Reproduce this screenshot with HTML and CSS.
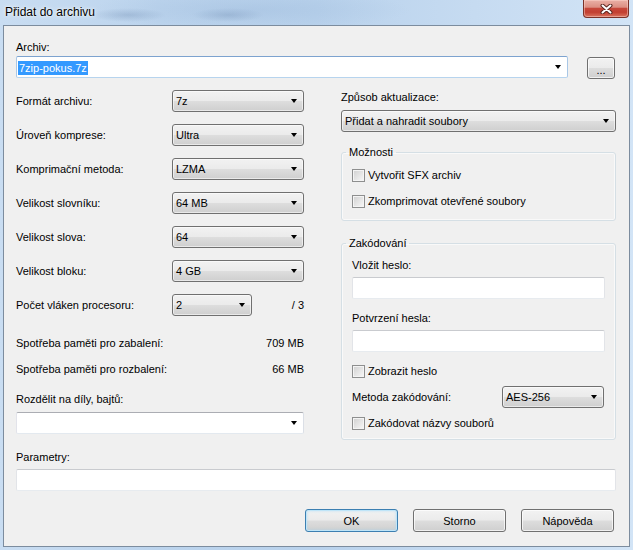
FILE: index.html
```html
<!DOCTYPE html>
<html lang="cs">
<head>
<meta charset="utf-8">
<title>Přidat do archivu</title>
<link rel="stylesheet" href="styles.css">
</head>
<body>
<div class="window">
  <div class="titlebar">
    <span class="title">Přidat do archivu</span>
    <div class="close">
      <svg width="13" height="10" viewBox="0 0 13 10"><path d="M2.5 1.5 L10.5 8.5 M10.5 1.5 L2.5 8.5" stroke="#5a2620" stroke-width="4" stroke-linecap="round" fill="none"/><path d="M2.5 1.5 L10.5 8.5 M10.5 1.5 L2.5 8.5" stroke="#ffffff" stroke-width="2" stroke-linecap="round" fill="none"/></svg>
    </div>
  </div>
  <div class="client">
    <div class="lbl">Archiv:</div>
    <div class="archive-row">
      <div class="edit-combo focused archive-combo"><span class="sel">7zip-pokus.7z</span><span class="arrow"></span></div>
      <button class="btn browse">...</button>
    </div>

    <div class="columns">
      <div class="col-left">
        <div class="row"><span class="rlabel">Formát archivu:</span><div class="combo w132">7z<span class="arrow"></span></div></div>
        <div class="row gap"><span class="rlabel">Úroveň komprese:</span><div class="combo w132">Ultra<span class="arrow"></span></div></div>
        <div class="row gap"><span class="rlabel">Komprimační metoda:</span><div class="combo w132">LZMA<span class="arrow"></span></div></div>
        <div class="row gap"><span class="rlabel">Velikost slovníku:</span><div class="combo w132">64 MB<span class="arrow"></span></div></div>
        <div class="row gap"><span class="rlabel">Velikost slova:</span><div class="combo w132">64<span class="arrow"></span></div></div>
        <div class="row gap"><span class="rlabel">Velikost bloku:</span><div class="combo w132">4 GB<span class="arrow"></span></div></div>
        <div class="row gap"><span class="rlabel">Počet vláken procesoru:</span><div class="combo w80">2<span class="arrow"></span></div><span class="threads">/ 3</span></div>
        <div class="info first"><span>Spotřeba paměti pro zabalení:</span><span>709 MB</span></div>
        <div class="info"><span>Spotřeba paměti pro rozbalení:</span><span>66 MB</span></div>
        <div class="lbl split-lbl">Rozdělit na díly, bajtů:</div>
        <div class="edit-combo split-combo"><span class="arrow"></span></div>
      </div>

      <div class="col-right">
        <div class="lbl">Způsob aktualizace:</div>
        <div class="combo full update-combo">Přidat a nahradit soubory<span class="arrow"></span></div>

        <fieldset class="group options">
          <legend>Možnosti</legend>
          <div class="check"><span class="box"></span><span>Vytvořit SFX archiv</span></div>
          <div class="check gap12"><span class="box"></span><span>Zkomprimovat otevřené soubory</span></div>
        </fieldset>

        <fieldset class="group encrypt">
          <legend>Zakódování</legend>
          <div class="lbl">Vložit heslo:</div>
          <div class="textbox pw"></div>
          <div class="lbl gap12">Potvrzení hesla:</div>
          <div class="textbox pw"></div>
          <div class="check gap12"><span class="box"></span><span>Zobrazit heslo</span></div>
          <div class="row method"><span class="mlabel">Metoda zakódování:</span><div class="combo w102">AES-256<span class="arrow"></span></div></div>
          <div class="check gap8"><span class="box"></span><span>Zakódovat názvy souborů</span></div>
        </fieldset>
      </div>
    </div>

    <div class="lbl params-lbl">Parametry:</div>
    <div class="textbox params"></div>

    <div class="buttons">
      <button class="btn default">OK</button>
      <button class="btn">Storno</button>
      <button class="btn">Nápověda</button>
    </div>
  </div>
</div>
</body>
</html>
```

FILE: styles.css
```css
* { box-sizing: border-box; }
html, body { margin: 0; padding: 0; }
body {
  width: 633px;
  height: 550px;
  overflow: hidden;
  font-family: "Liberation Sans", Arial, sans-serif;
  font-size: 11px;
  color: #000;
  background: #c3d9f0;
}
.window {
  width: 633px;
  height: 550px;
  display: flex;
  flex-direction: column;
  padding: 0 3px 3px 3px;
  background:
    radial-gradient(ellipse 38px 7px at 128px 15px, rgba(95,125,165,0.28), rgba(95,125,165,0) 100%),
    radial-gradient(ellipse 36px 7px at 228px 15px, rgba(95,125,165,0.26), rgba(95,125,165,0) 100%),
    radial-gradient(ellipse 160px 20px at 250px 10px, rgba(150,180,215,0.35), rgba(150,180,215,0) 100%),
    linear-gradient(to right, #c9ddf2 0%, #bcd4ed 25%, #b9d2ec 50%, #c6dbf1 75%, #d2e4f6 100%);
}
.titlebar {
  height: 25px;
  flex: none;
  display: flex;
  align-items: flex-start;
}
.title {
  font-size: 12px;
  margin: 5px 0 0 2px;
  line-height: 14px;
  text-shadow: 0 0 5px rgba(255,255,255,0.9), 0 0 2px rgba(255,255,255,0.9);
}
.close {
  margin-left: auto;
  margin-right: 1px;
  width: 46px;
  height: 18px;
  border: 1px solid #7a3128;
  border-top: none;
  border-radius: 0 0 4px 4px;
  background: linear-gradient(#eab0a6 0%, #dc8f83 42%, #c6473a 50%, #c23f31 72%, #d9735f 100%);
  box-shadow: inset 0 0 0 1px rgba(255,220,210,0.45);
  display: flex;
  align-items: center;
  justify-content: center;
}
.client {
  flex: 1;
  border: 1px solid #7c8c9e;
  background: #f0f0f0;
  padding: 14px 13px 0 12px;
  display: flex;
  flex-direction: column;
}
.lbl { line-height: 14px; height: 14px; white-space: nowrap; }
.archive-row {
  display: flex;
  align-items: flex-start;
  margin-top: 2px;
}
.arrow {
  width: 0;
  height: 0;
  border-left: 3.5px solid transparent;
  border-right: 3.5px solid transparent;
  border-top: 4px solid #000;
  margin-left: auto;
  flex: none;
}
.edit-combo {
  height: 22px;
  background: #fff;
  border: 1px solid;
  border-color: #abadb3 #dbdfe6 #e3e9ef #e2e3ea;
  border-radius: 2px;
  display: flex;
  align-items: center;
  padding: 0 6px 0 1px;
}
.edit-combo.focused { border-color: #7da3cf #a9c7e6 #b7d4ee #a9c7e6; }
.archive-combo { width: 552px; }
.sel {
  background: #3399ff;
  color: #fff;
  line-height: 14px;
  padding: 0 1px;
  margin-top: 1px;
}
.btn {
  font-family: "Liberation Sans", Arial, sans-serif;
  font-size: 11px;
  color: #000;
  border: 1px solid #707070;
  border-radius: 3px;
  background: linear-gradient(#f2f2f2 0%, #ebebeb 48%, #dddddd 52%, #cfcfcf 100%);
  box-shadow: inset 0 0 0 1px rgba(255,255,255,0.7);
  padding: 0;
}
.browse {
  width: 28px;
  height: 22px;
  margin-left: auto;
  margin-right: 1px;
  margin-top: 1px;
  padding-top: 4px;
}
.columns {
  display: flex;
  align-items: flex-start;
  justify-content: space-between;
  margin-top: 11px;
}
.col-left { width: 288px; display: flex; flex-direction: column; }
.col-right { width: 275px; display: flex; flex-direction: column; }
.row { display: flex; align-items: center; height: 22px; }
.row.gap { margin-top: 12px; }
.rlabel { width: 156px; flex: none; white-space: nowrap; }
.combo {
  height: 22px;
  border: 1px solid #707070;
  border-radius: 3px;
  background: linear-gradient(#f2f2f2 0%, #ebebeb 48%, #dddddd 52%, #cfcfcf 100%);
  box-shadow: inset 0 0 0 1px rgba(255,255,255,0.55);
  display: flex;
  align-items: center;
  padding: 0 6px 0 3px;
  white-space: nowrap;
  flex: none;
}
.w132 { width: 132px; }
.w80 { width: 80px; }
.w102 { width: 102px; }
.full { width: 275px; }
.threads { margin-left: auto; }
.info {
  display: flex;
  justify-content: space-between;
  line-height: 14px;
  margin-top: 12px;
}
.info.first { margin-top: 20px; }
.split-lbl { margin-top: 16px; }
.split-combo { margin-top: 6px; width: 288px; }
.update-combo { margin-top: 6px; }
.group {
  margin: 0;
  border: 1px solid #d5dfe5;
  border-radius: 3px;
  box-shadow: inset 0 0 0 1px rgba(255,255,255,0.6);
  min-inline-size: 0;
}
.group legend {
  padding: 0 3px;
  margin-left: -6px;
  line-height: 14px;
}
.options { margin-top: 13px; padding: 9px 10px 12px 10px; }
.encrypt { margin-top: 15px; padding: 8px 10px 9px 10px; }
.check {
  display: flex;
  align-items: center;
  height: 14px;
  white-space: nowrap;
}
.check .box {
  width: 13px;
  height: 13px;
  flex: none;
  border: 1px solid #8e8f8f;
  background: linear-gradient(135deg, #d0d0d0 0%, #e8e8e8 60%, #f8f8f8 100%);
  box-shadow: inset 0 0 0 1px #f4f4f4;
  margin-right: 3px;
}
.gap12 { margin-top: 12px; }
.gap8 { margin-top: 8px; }
.textbox {
  height: 22px;
  background: #fff;
  border: 1px solid;
  border-color: #c9cbcf #e2e4e8 #e7ebef #e2e4e8;
  border-radius: 2px;
}
.pw { margin-top: 5px; }
.method { margin-top: 8px; }
.mlabel { width: 150px; flex: none; }
.params-lbl { margin-top: 10px; }
.params { margin-top: 5px; }
.buttons {
  display: flex;
  justify-content: flex-end;
  gap: 15px;
  margin-top: 18px;
  padding-right: 2px;
}
.buttons .btn { width: 93px; height: 23px; }
.btn.default {
  border-color: #3c7fb1;
  box-shadow: inset 0 0 0 1px #bfe5f8, inset 0 0 3px 1px rgba(160,215,245,0.6);
}
```
